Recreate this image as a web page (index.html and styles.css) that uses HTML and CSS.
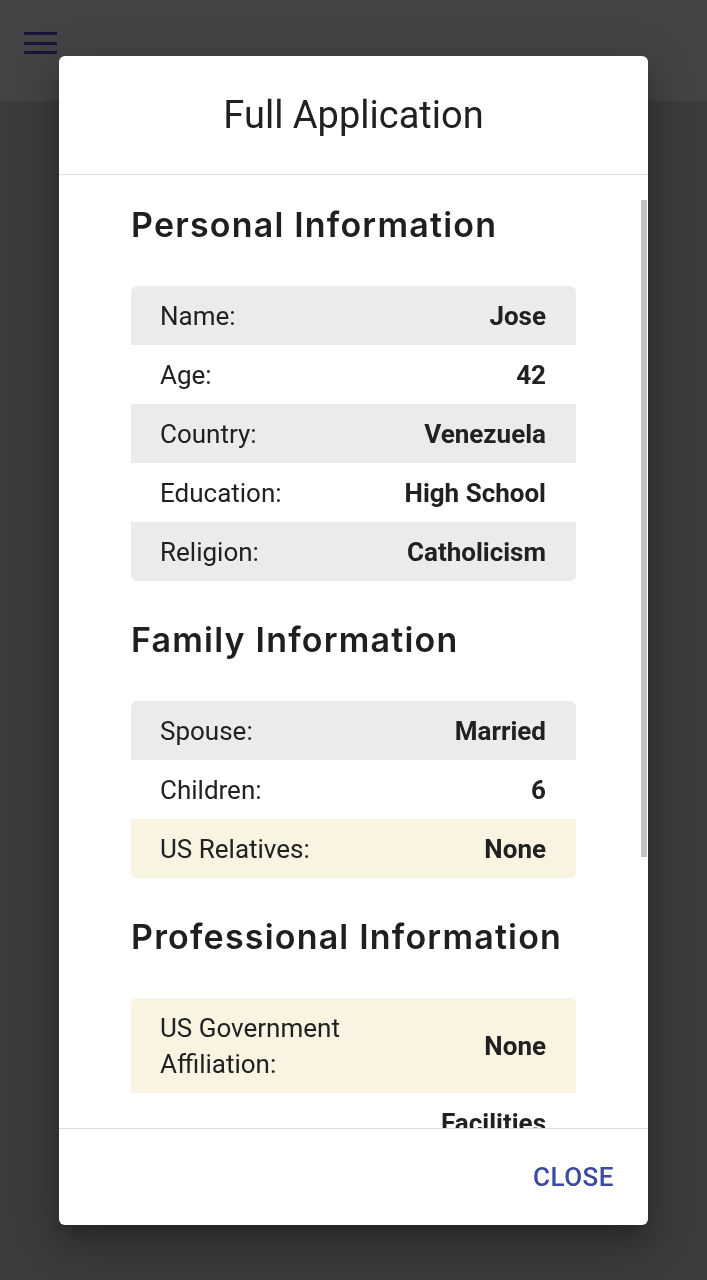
FILE: index.html
```html
<!DOCTYPE html>
<html lang="en">
<head>
<meta charset="utf-8">
<title>Full Application</title>
<link rel="stylesheet" href="styles.css">
</head>
<body>
<header class="appbar">
  <button class="menu-btn" aria-label="Menu">
    <span class="bar"></span><span class="bar"></span><span class="bar"></span>
  </button>
</header>
<main class="page"></main>

<div class="overlay">
  <div class="dialog" role="dialog" aria-labelledby="dlg-title">
    <div class="dialog-header">
      <h1 id="dlg-title" class="dialog-title">Full Application</h1>
    </div>
    <div class="dialog-content">
      <h2 class="section-title">Personal Information</h2>
      <div class="info-table">
        <div class="row"><span class="label">Name:</span><span class="value">Jose</span></div>
        <div class="row"><span class="label">Age:</span><span class="value">42</span></div>
        <div class="row"><span class="label">Country:</span><span class="value">Venezuela</span></div>
        <div class="row"><span class="label">Education:</span><span class="value">High School</span></div>
        <div class="row"><span class="label">Religion:</span><span class="value">Catholicism</span></div>
      </div>

      <h2 class="section-title">Family Information</h2>
      <div class="info-table">
        <div class="row"><span class="label">Spouse:</span><span class="value">Married</span></div>
        <div class="row"><span class="label">Children:</span><span class="value">6</span></div>
        <div class="row highlight"><span class="label">US Relatives:</span><span class="value">None</span></div>
      </div>

      <h2 class="section-title">Professional Information</h2>
      <div class="info-table">
        <div class="row highlight"><span class="label">US Government Affiliation:</span><span class="value">None</span></div>
        <div class="row plain"><span class="label">Occupation:</span><span class="value">Facilities Maintenance</span></div>
      </div>
      <div class="scroll-thumb"></div>
    </div>
    <div class="dialog-footer">
      <button class="close-btn">CLOSE</button>
    </div>
  </div>
</div>
</body>
</html>
```

FILE: styles.css
```css
* { box-sizing: border-box; }

html, body {
  margin: 0;
  padding: 0;
  height: 100%;
}

body {
  background: #3c3c3c;
  font-family: Roboto, "Liberation Sans", sans-serif;
  color: #212121;
  overflow: hidden;
}

.appbar {
  height: 101px;
  background: #444444;
  padding: 32px 0 0 24px;
}

.menu-btn {
  display: flex;
  flex-direction: column;
  gap: 6.3px;
  background: none;
  border: 0;
  padding: 0;
  width: 33px;
}

.menu-btn .bar {
  display: block;
  height: 3.3px;
  width: 33px;
  background: #15163a;
}

.overlay {
  position: fixed;
  inset: 0;
  padding: 56px 0 0 59px;
}

.dialog {
  position: relative;
  width: 589px;
  height: 1169px;
  background: #ffffff;
  border-radius: 6px;
  display: flex;
  flex-direction: column;
  box-shadow: 0 11px 15px -7px rgba(0,0,0,.25), 0 24px 38px 3px rgba(0,0,0,.16), 0 9px 46px 8px rgba(0,0,0,.14);
}

.dialog-header {
  height: 119px;
  border-bottom: 1px solid #e0e0e0;
  flex: none;
}

.dialog-title {
  margin: 0;
  font-family: Roboto, "Liberation Sans", sans-serif;
  font-weight: 400;
  font-size: 38px;
  line-height: 118px;
  text-align: center;
  color: #212121;
}

.dialog-content {
  flex: 1;
  overflow: hidden;
  padding: 33px 72px 0 72px;
}

.section-title {
  margin: 42px 0 44px 0;
  font-family: Inter, "Open Sans", sans-serif;
  font-weight: 600;
  font-size: 34px;
  line-height: 34px;
  letter-spacing: 1.2px;
  color: #1f1f1f;
}

.section-title:first-child {
  margin-top: 0;
}

.info-table {
  border-radius: 6px;
  overflow: hidden;
}

.row {
  display: grid;
  grid-template-columns: 1fr 1fr;
  align-items: center;
  padding: 11.5px 30px 11.5px 29px;
  font-size: 26px;
  line-height: 36px;
  background: #ffffff;
}

.row:nth-child(odd) {
  background: #ebebeb;
}

.row.highlight {
  background: #f9f3e2;
}

.row.plain {
  background: #ffffff;
}

.label {
  font-weight: 400;
  color: #212121;
}

.value {
  font-weight: 700;
  text-align: right;
  color: #212121;
}

.scroll-thumb {
  position: absolute;
  right: 1px;
  top: 144px;
  width: 6px;
  height: 657px;
  background: #c2c2c2;
}

.dialog-footer {
  height: 97px;
  border-top: 1px solid #e0e0e0;
  flex: none;
  display: flex;
  align-items: center;
  justify-content: flex-end;
  padding-right: 34px;
}

.close-btn {
  background: none;
  border: 0;
  padding: 0;
  font-family: Roboto, "Liberation Sans", sans-serif;
  font-weight: 500;
  font-size: 26px;
  letter-spacing: 0.5px;
  color: #3b4a9e;
  line-height: 36px;
}
```
